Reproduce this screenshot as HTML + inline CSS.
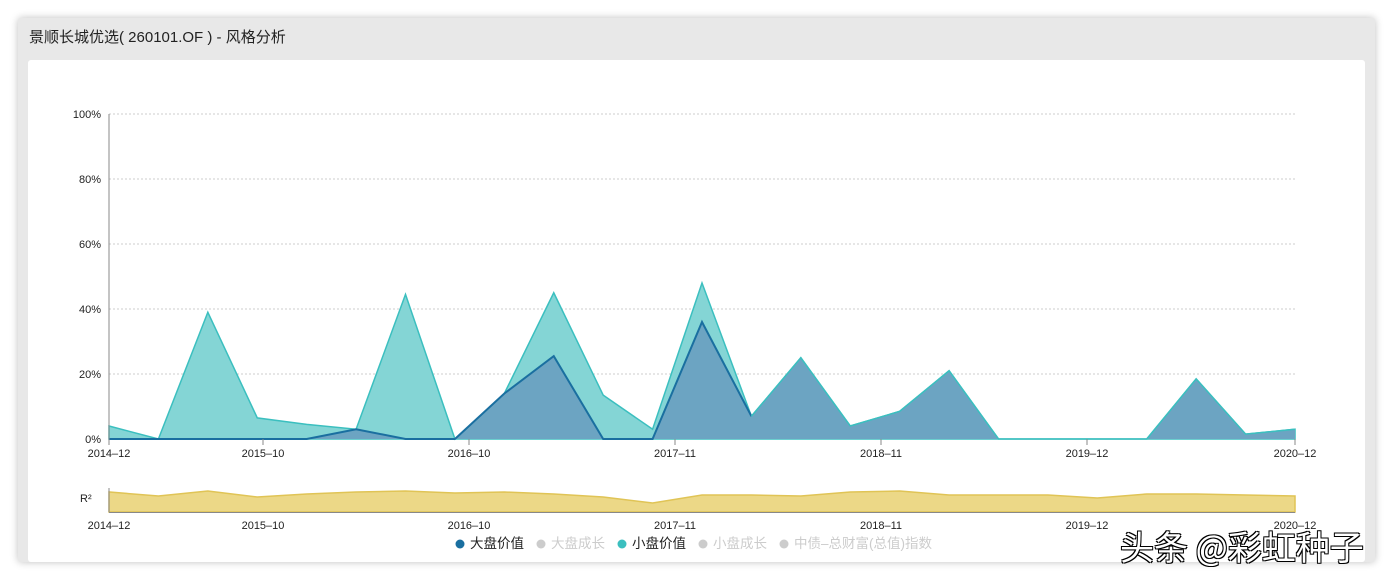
<!DOCTYPE html><html><head><meta charset="utf-8"><style>
body{margin:0;width:1393px;height:580px;background:#fff;font-family:"Liberation Sans","Noto Sans CJK SC",sans-serif;overflow:hidden}
.card{position:absolute;left:18px;top:18px;width:1357px;height:544px;background:#e8e8e8;box-shadow:0 0 8px rgba(0,0,0,.25);border-radius:3px}
.title{position:absolute;left:11px;top:8px;font-size:15px;color:#222}
.inner{position:absolute;left:10px;top:42px;width:1337px;height:502px;background:#fff;border-radius:3px}
svg{position:absolute;left:0;top:0}
.wm{position:absolute;left:1120px;top:521px;font-size:34px;color:#fff;font-family:"Noto Sans CJK SC",sans-serif;text-shadow:1px 1px 0 #000,-1px -1px 0 #000,1px -1px 0 #000,-1px 1px 0 #000}
</style></head><body>
<div class="card"><div class="title">景顺长城优选( 260101.OF ) - 风格分析</div><div class="inner"></div></div>
<svg width="1393" height="580" font-family="Liberation Sans, Noto Sans CJK SC, sans-serif" font-size="11" fill="#222">
<g stroke="#ccc" stroke-dasharray="2,2">
<line x1="109" x2="1295" y1="114" y2="114"/><line x1="109" x2="1295" y1="179" y2="179"/><line x1="109" x2="1295" y1="244" y2="244"/><line x1="109" x2="1295" y1="309" y2="309"/><line x1="109" x2="1295" y1="374" y2="374"/></g>
<g text-anchor="end"><text x="101" y="118">100%</text><text x="101" y="183">80%</text><text x="101" y="248">60%</text><text x="101" y="313">40%</text><text x="101" y="378">20%</text><text x="101" y="443">0%</text></g>
<g transform="translate(109,439) scale(49.417,-3.25)">
<polygon fill="#84d5d5" stroke="#3bbfbf" stroke-width="1.5" vector-effect="non-scaling-stroke" points="0,0 0,4 1,0 2,39 3,6.5 4,4.5 5,3 6,44.5 7,0 8,14 9,45 10,13.5 11,3 12,48 13,7 14,25 15,4 16,8.5 17,21 18,0 19,0 20,0 21,0 22,18.5 23,1.5 24,3 24,0"/>
<polygon fill="#6ca4c2" stroke="none" points="0,0 1,0 2,0 3,0 4,0 5,3 6,0 7,0 8,14 9,25.5 10,0 11,0 12,36 13,7 14,25 15,4 16,8.5 17,21 18,0 19,0 20,0 21,0 22,18.5 23,1.5 24,3 24,0"/>
<polyline fill="none" stroke="#1a6fa0" stroke-width="2" vector-effect="non-scaling-stroke" points="0,0 1,0 2,0 3,0 4,0 5,3 6,0 7,0 8,14 9,25.5 10,0 11,0 12,36 13,7"/>
<polyline fill="none" stroke="#3bbfbf" stroke-width="1.5" vector-effect="non-scaling-stroke" points="13,7 14,25 15,4 16,8.5 17,21 18,0 19,0 20,0 21,0 22,18.5 23,1.5 24,3"/>
</g>
<line x1="109" x2="109" y1="114" y2="439" stroke="#888"/>
<g stroke="#888"><line x1="109" x2="109" y1="439" y2="445"/><line x1="263" x2="263" y1="439" y2="445"/><line x1="469" x2="469" y1="439" y2="445"/><line x1="675" x2="675" y1="439" y2="445"/><line x1="881" x2="881" y1="439" y2="445"/><line x1="1087" x2="1087" y1="439" y2="445"/><line x1="1295" x2="1295" y1="439" y2="445"/></g>
<g text-anchor="middle"><text x="109" y="457">2014–12</text><text x="263" y="457">2015–10</text><text x="469" y="457">2016–10</text><text x="675" y="457">2017–11</text><text x="881" y="457">2018–11</text><text x="1087" y="457">2019–12</text><text x="1295" y="457">2020–12</text></g>
<g transform="translate(109,0) scale(49.417,1)">
<polygon fill="#ecd887" stroke="#e0c456" stroke-width="1.5" vector-effect="non-scaling-stroke" points="0,512 0,492 1,496 2,491 3,497 4,494 5,492 6,491 7,493 8,492 9,494 10,497 11,503 12,495 13,495 14,496 15,492 16,491 17,495 18,495 19,495 20,498 21,494 22,494 23,495 24,496 24,512"/>
</g>
<line x1="109" x2="109" y1="488" y2="512" stroke="#888"/><line x1="109" x2="1295" y1="512.5" y2="512.5" stroke="#888"/>
<text x="80" y="502">R²</text>
<g text-anchor="middle"><text x="109" y="529">2014–12</text><text x="263" y="529">2015–10</text><text x="469" y="529">2016–10</text><text x="675" y="529">2017–11</text><text x="881" y="529">2018–11</text><text x="1087" y="529">2019–12</text><text x="1295" y="529">2020–12</text></g>
<g font-size="13.5">
<circle cx="460" cy="544" r="4.5" fill="#1a6fa0"/><text x="470" y="548" fill="#222">大盘价值</text>
<circle cx="541" cy="544" r="4.5" fill="#ccc"/><text x="551" y="548" fill="#ccc">大盘成长</text>
<circle cx="622" cy="544" r="4.5" fill="#3bbfbf"/><text x="632" y="548" fill="#222">小盘价值</text>
<circle cx="703" cy="544" r="4.5" fill="#ccc"/><text x="713" y="548" fill="#ccc">小盘成长</text>
<circle cx="784" cy="544" r="4.5" fill="#ccc"/><text x="794" y="548" fill="#ccc">中债–总财富(总值)指数</text>
</g>
</svg>
<div class="wm">头条 @彩虹种子</div>
</body></html>
